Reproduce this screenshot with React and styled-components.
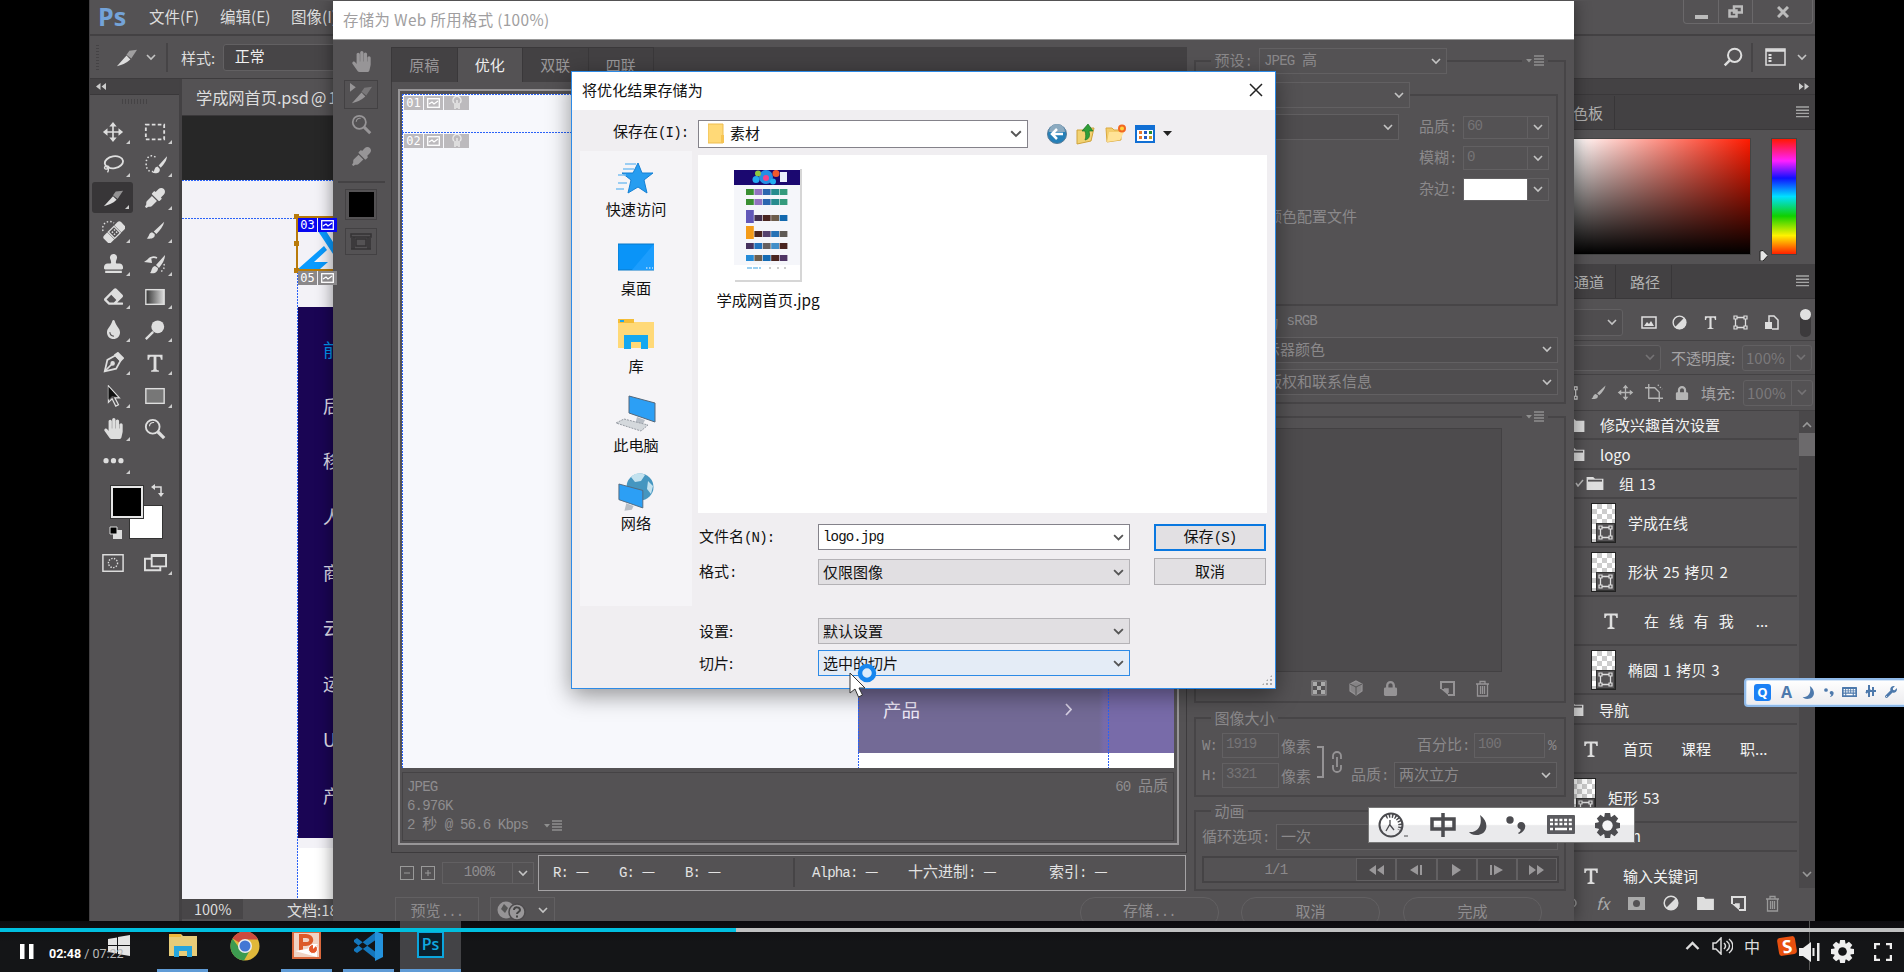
import React from "react";
import styled, { createGlobalStyle, css } from "styled-components";
import { FaEyeDropper, FaEraser, FaStamp, FaTint, FaHandPaper, FaLock, FaWrench } from "react-icons/fa";

const ui = `"Noto Sans CJK SC", sans-serif`;
const bg = "#545254";
const edge = "#434143";
const fieldLine = "#626062";
const dim = "#8b898b";

const Global = createGlobalStyle`
  * { box-sizing: border-box; }
  html, body { margin: 0; background: #000; }
  body { font: 15px/1 ${ui}; color: #ddd; }
  svg { display: block; flex: none; }
`;

const Stage = styled.div`
  position: relative;
  width: 1904px;
  height: 972px;
  overflow: hidden;
  background: #000;
  white-space: pre;
`;

/* ---------- text helpers ---------- */
const LatinRun = styled.span`
  font-family: "Liberation Mono", monospace;
  font-size: 0.94em;
  letter-spacing: -0.062em;
`;
function Song({ children }) {
  return String(children)
    .split(/([\x20-\x7e]+)/)
    .map((t, i) => (i % 2 ? <LatinRun key={i}>{t}</LatinRun> : t));
}
const Label = styled.span`
  display: inline-block;
  flex: none;
  width: ${(p) => (p.$w ? p.$w + "px" : "auto")};
  margin-left: ${(p) => p.$ml || 0}px;
  font-size: ${(p) => (p.$size ? p.$size + "px" : "inherit")};
  color: ${(p) => p.$color || "inherit"};
`;
const Gap = styled.span`
  flex: none;
  width: ${(p) => p.$w}px;
`;

/* ---------- icons ---------- */
function Svg({ s = 22, h, vb = 24, children, color = "#dedede", ...r }) {
  return (
    <svg width={s} height={h || s} viewBox={`0 0 ${vb} ${vb}`} fill="none" stroke={color} strokeWidth="2" {...r}>
      {children}
    </svg>
  );
}
const Chevron = ({ color = "#c4c4c4", w = 10, flip }) => (
  <svg width={w} height={w * 0.7} viewBox="0 0 10 7" fill="none" stroke={color} strokeWidth="1.6">
    <path d={flip ? "M1 6l4-4 4 4" : "M1 1l4 4 4-4"} />
  </svg>
);
const MenuLines = ({ color = "#a5a5a5" }) => (
  <svg width="13" height="12" viewBox="0 0 13 12" stroke={color} strokeWidth="1.4">
    <path d="M0 1h13M0 4.2h13M0 7.4h13M0 10.6h13" />
  </svg>
);
const FlyoutMenu = () => (
  <svg width="18" height="12" viewBox="0 0 18 12" stroke="#8f8f8f" strokeWidth="1.4">
    <path d="M0 4h6l-3 3.500z" fill="#8f8f8f" stroke="none" />
    <path d="M8 1h10M8 4h10M8 7h10M8 10h10" />
  </svg>
);
const Move = ({ s, color = "#dedede" }) => (
  <Svg s={s} color={color}>
    <path d="M12 4v16M4 12h16" strokeWidth="1.8" />
    <path d="M12 1l4 5H8zM12 23l4-5H8zM1 12l5-4v8zM23 12l-5-4v8z" fill={color} stroke="none" />
  </Svg>
);
const Marquee = () => (
  <Svg>
    <rect x="2" y="4" width="20" height="16" strokeDasharray="4 2.500" />
  </Svg>
);
const Lasso = () => (
  <Svg>
    <ellipse cx="13" cy="9" rx="10" ry="6.500" transform="rotate(-10 13 9)" />
    <path d="M5 13c-4 1-2 5 1 3s1-3-1-3c2 2 3 4 1 7" strokeWidth="1.500" />
  </Svg>
);
const QuickSelect = () => (
  <Svg s={25}>
    <path d="M12 5c-4-3-9-1-9 6s4 9 9 7" strokeDasharray="1.500 2" strokeWidth="1.500" />
    <path d="M23 4l-8 9 2 2c3-3 6-7 6-11zM14 14c-4 1-2 4-5 6 4 1 8 0 7-4z" fill="#dedede" stroke="none" />
  </Svg>
);
const Slice = ({ s = 22, color = "#dedede", pick }) => (
  <Svg s={s} color={color}>
    <path d="M2 21L12 10l4 4C12 18 6 20 2 21z" fill={color} stroke="none" />
    <path d="M12 9l3-4 8-1-6 9z" fill={color} opacity=".55" stroke="none" />
    {pick && <path d="M0 0v9l6-4.500z" fill={color} stroke="none" />}
  </Svg>
);
const Brush = ({ s = 21, color = "#dedede" }) => (
  <Svg s={s} color={color}>
    <path d="M22 2L10 13l3 3c4-4 8-9 9-14zM8 14c-4 1-3 5-6 7 5 1 10 0 9-5z" fill={color} stroke="none" />
  </Svg>
);
const Healing = () => (
  <Svg s={24}>
    <path d="M2 12c-2-8 6-12 11-8" strokeDasharray="1.500 2" strokeWidth="1.400" />
    <g transform="rotate(-45 13 13)">
      <rect x="1" y="8.500" width="24" height="10" rx="2.500" fill="#dedede" stroke="none" />
      <rect x="8" y="8" width="10" height="11" fill="#545254" stroke="none" />
      <rect x="9" y="9" width="8" height="9" strokeWidth="1.300" />
      <path d="M11 12h1.500M14 12h1.500M11 15h1.500M14 15h1.500" strokeWidth="1.500" />
    </g>
  </Svg>
);
const HistoryBrush = () => (
  <Svg s={24}>
    <path d="M22 3l-9 10 3 3c3-4 6-8 6-13zM12 14c-4 1-3 5-5 7 5 1 8-1 8-5z" fill="#dedede" stroke="none" />
    <path d="M5 10c0-4 5-6 9-4" strokeWidth="1.600" />
    <path d="M1 10l7-5 1 6z" fill="#dedede" stroke="none" />
    <path d="M21 12c1 4-1 7-4 8" strokeDasharray="1.500 2" strokeWidth="1.400" />
  </Svg>
);
const GradientTool = () => (
  <Svg>
    <defs>
      <linearGradient id="toolGradient">
        <stop stopColor="#333" />
        <stop offset="1" stopColor="#ddd" />
      </linearGradient>
    </defs>
    <rect x="2" y="4" width="20" height="16" fill="url(#toolGradient)" strokeWidth="1.500" />
  </Svg>
);
const Dodge = () => (
  <Svg>
    <circle cx="15" cy="8.500" r="7" fill="#dedede" stroke="none" />
    <path d="M10 14l-8 8" strokeWidth="2.500" />
  </Svg>
);
const Pen = () => (
  <Svg s={21}>
    <path d="M2 22l3-13 9-5 6 6-5 9z" />
    <path d="M14 3l3-2 6 6-3 3z" fill="#dedede" />
    <path d="M2 22l8-8" />
    <circle cx="11" cy="13" r="1.600" fill="#dedede" />
  </Svg>
);
const TypeT = ({ s = 22, color = "#dedede" }) => (
  <Svg s={s} color={color}>
    <path d="M3 2h18v6h-2c0-3-1-3.500-3-3.500h-2.300V19c0 1.500 1 1.800 3 2v1.500H7.300V21c2 -.2 3-.5 3-2V4.500H8C6 4.500 5 5 5 8H3z" fill={color} stroke="none" />
  </Svg>
);
const PathSelect = () => (
  <Svg>
    <path d="M7 1v18l4-4 4 8 3-1.500-4-7.500h5z" strokeWidth="1.300" fill="#545254" />
    <path d="M7 2v14l4-4 6 1z" fill="#111" stroke="none" />
  </Svg>
);
const RectTool = () => (
  <Svg>
    <rect x="2" y="4" width="20" height="16" fill="#777" strokeWidth="1.500" />
  </Svg>
);
const Zoom = ({ color = "#dedede", s = 22 }) => (
  <Svg s={s} color={color}>
    <circle cx="9.500" cy="9.500" r="7.500" />
    <path d="M6 9a4 4 0 0 1 5-4" strokeWidth="1.200" />
    <path d="M15 15l7 7" strokeWidth="3.500" />
  </Svg>
);
const Dots = () => (
  <Svg s={21}>
    <g fill="#dedede" stroke="none">
      <circle cx="3.500" cy="11" r="3" />
      <circle cx="12" cy="11" r="3" />
      <circle cx="20.500" cy="11" r="3" />
    </g>
  </Svg>
);
const FolderIcon = ({ w = 18, open }) => (
  <svg width={w} height="14" viewBox="0 0 18 15">
    <path d="M0 1h7l2 2h9v12H0z" fill="#dedede" />
    {open && <path d="M1.500 5h15" stroke="#545254" strokeWidth="2" />}
  </svg>
);
const Trash = ({ color = "#999" }) => (
  <Svg s={17} color={color} vb={17}>
    <path d="M2 4h13M6 3.500V1.500h5v2M3.500 4v12h10V4M6.500 6v8M8.500 6v8M10.500 6v8" strokeWidth="1.300" />
  </Svg>
);
const NewPage = ({ color = "#dedede" }) => (
  <Svg s={15} color={color} vb={15}>
    <path d="M1 8V1h13v13H8" />
    <path d="M1 8h7v6z" fill={color} stroke="none" />
    <path d="M4 8h4v4" strokeWidth="1.500" />
  </Svg>
);
const HalfDisc = ({ s = 16 }) => (
  <Svg s={s} vb={16}>
    <circle cx="8" cy="8" r="6.800" strokeWidth="1.500" />
    <path d="M13 3a7 7 0 0 1-10 10z" fill="#dedede" stroke="none" />
  </Svg>
);
const ShapeBox = ({ s = 15 }) => (
  <Svg s={s} vb={15}>
    <path d="M2.500 2.500h10v10h-10z" strokeWidth="1.300" />
    <path d="M1 1h3v3H1zM11 1h3v3h-3zM1 11h3v3H1zM11 11h3v3h-3z" fill="#545254" strokeWidth="1.200" />
  </Svg>
);
const PictureIcon = ({ color = "#dedede", w = 16 }) => (
  <svg width={w} height="13" viewBox="0 0 16 13" fill="none" stroke={color} strokeWidth="1.500">
    <rect x="1" y="1" width="14" height="11" />
    <path d="M3 10l3-4 2 2 2-3 3 5z" fill={color} stroke="none" />
  </svg>
);
const SliceMark = () => (
  <svg width="13" height="10" viewBox="0 0 13 10" fill="none" stroke="#fff" strokeWidth="1.300">
    <rect x=".7" y=".7" width="11.600" height="8.600" />
    <path d="M2 6l3-2 2 2 4-3" />
  </svg>
);
const CropIcon = () => (
  <Svg s={18} color="#b5b5b5">
    <path d="M5 0v19h19M0 5h13l6 6v13" strokeWidth="1.800" />
    <path d="M17 1l6 6" strokeWidth="1.500" strokeDasharray="2 2" />
  </Svg>
);
const Moon = ({ color, s = 20 }) => (
  <svg width={s} height={s} viewBox="0 0 20 20">
    <path d="M12 0c10 7 8 20-4 20-4 0-6-2-7-3C9 18 15 11 12 0z" fill={color} />
  </svg>
);
const Keyboard = ({ color, w = 28 }) => (
  <svg width={w} height={w * 0.68} viewBox="0 0 28 19">
    <rect width="28" height="19" rx="1" fill={color} />
    <path d="M3 5h22M3 9h22" stroke="#fff" strokeWidth="2.600" strokeDasharray="3 1.700" />
    <path d="M3 14h3M8 14h12M22 14h3" stroke="#fff" strokeWidth="2.400" />
  </svg>
);
const Comma = ({ color, w = 20 }) => (
  <svg width={w} height={w * 0.9} viewBox="0 0 20 18" fill={color}>
    <circle cx="4" cy="4" r="3.700" />
    <path d="M15 6c6 0 6 9-2 12l-1-1c3-2 3-3 2-4-4-1-3-7 1-7z" />
  </svg>
);
const Gear = ({ color, s, hole = "#fff", r = 4 }) => (
  <svg width={s} height={s} viewBox="0 0 24 24">
    <g fill={color}>
      <circle cx="12" cy="12" r="9" />
      {[0, 45, 90, 135, 180, 225, 270, 315].map((a) => (
        <path key={a} d="M9.500 0h5l1 6h-7z" transform={`rotate(${a} 12 12)`} />
      ))}
    </g>
    <circle cx="12" cy="12" r={r} fill={hole} />
  </svg>
);

/* ---------- generic controls ---------- */
const SelectBox = styled.div`
  display: flex;
  flex: none;
  align-items: center;
  justify-content: space-between;
  width: ${(p) => p.$w}px;
  height: ${(p) => p.$h || 26}px;
  padding: 0 5px 0 4px;
  border: 1px solid ${fieldLine};
  border-radius: ${(p) => p.$r || 0}px;
  background: ${(p) => p.$fill || "#4f4d4f"};
  color: ${(p) => p.$color || dim};
  & > span {
    padding-bottom: 3px;
  }
`;
const NumberBox = styled.div`
  display: flex;
  flex: none;
  align-items: stretch;
  width: ${(p) => p.$w}px;
  height: ${(p) => p.$h || 25}px;
  border: 1px solid ${fieldLine};
  border-radius: ${(p) => p.$r || 0}px;
  color: ${(p) => p.$color || "#767476"};
  & > span:first-child {
    flex: 1;
    display: flex;
    align-items: center;
    justify-content: ${(p) => (p.$center ? "center" : "flex-start")};
    padding: 0 0 1px 3px;
    background: ${(p) => p.$paint || "transparent"};
  }
`;
const DropPart = styled.span`
  display: flex;
  width: 21px;
  align-items: center;
  justify-content: center;
  border-left: 1px solid ${fieldLine};
`;
const Row = styled.div`
  display: flex;
  flex: none;
  align-items: center;
  height: ${(p) => p.$h}px;
  margin-top: ${(p) => p.$mt || 0}px;
  padding-left: ${(p) => p.$pl || 0}px;
`;

/* ---------- Photoshop main window ---------- */
const PsWindow = styled.section`
  position: absolute;
  left: 89px;
  top: 0;
  width: 1726px;
  height: 921px;
  display: flex;
  flex-direction: column;
  background: ${bg};
  border-left: 1px solid ${edge};
`;
const MenuBar = styled.header`
  display: flex;
  height: 36px;
  padding-left: 8px;
  font-size: 15.5px;
  border-bottom: 2px solid ${edge};
`;
const PsMark = styled.b`
  width: 51px;
  font: bold 25px/32px "Open Sans", sans-serif;
  color: #74a3d8;
`;
const MenuItem = styled.span`
  width: 71px;
  line-height: 33px;
`;
const WindowButtons = styled.div`
  display: flex;
  height: 24px;
  margin: 0 2px 0 auto;
  border: 1px solid #6a686a;
  border-top: 0;
  border-radius: 0 0 4px 4px;
  color: #bdbdbd;
`;
const WindowButton = styled.span`
  display: flex;
  width: ${(p) => p.$w}px;
  align-items: center;
  justify-content: center;
  & + & {
    border-left: 1px solid #6a686a;
  }
`;
const OptionsBar = styled.div`
  display: flex;
  align-items: center;
  height: 43px;
  border-bottom: 1px solid #3d3b3d;
  padding-left: 6px;
  & > svg {
    margin-right: 8px;
  }
`;
const Grip = styled.span`
  width: ${(p) => p.$w}px;
  height: ${(p) => p.$h}px;
  background: repeating-linear-gradient(${(p) => (p.$x ? "90deg" : "180deg")}, #454345 0 1px, transparent 1px 3px);
`;
const Divider = styled.span`
  width: 2px;
  height: ${(p) => p.$h || 29}px;
  margin-left: ${(p) => p.$ml || 0}px;
  background: #464446;
`;
const PsBody = styled.div`
  display: flex;
  flex: 1;
  min-height: 0;
`;
const Toolbox = styled.aside`
  width: 92px;
  border-right: 3px solid ${edge};
`;
const CollapseStrip = styled.div`
  display: flex;
  align-items: center;
  justify-content: ${(p) => (p.$right ? "flex-end" : "flex-start")};
  height: 16px;
  padding: 0 6px;
  background: #444244;
  border-bottom: 1px solid #3a383a;
`;
const ToolGrid = styled.div`
  display: grid;
  grid-template-columns: 42px 42px;
  grid-auto-rows: 33px;
  margin: ${(p) => (p.$tight ? 2 : 7)}px 0 0 2px;
`;
const ToolCell = styled.div`
  position: relative;
  display: flex;
  align-items: center;
  justify-content: center;
  color: #dedede;
  ${(p) =>
    p.$active &&
    css`
      background: #383638;
      border-radius: 3px;
      margin: 1px 1px 1px 0;
    `}
  &::after {
    content: "";
    position: absolute;
    right: 4px;
    bottom: 4px;
    border: 2px solid;
    border-color: transparent #ccc #ccc transparent;
    opacity: ${(p) => (p.$plain ? 0 : 1)};
  }
`;
const SwatchArea = styled.div`
  position: relative;
  height: 58px;
  margin: 8px 0 0 18px;
`;
const Swatch = styled.span`
  position: absolute;
  left: ${(p) => p.$x}px;
  top: ${(p) => p.$y}px;
  width: 32px;
  height: 32px;
  border: 2px solid ${(p) => (p.$dark ? "#e6e6e6" : "#fff")};
  outline: 1px solid #333;
  background: ${(p) => (p.$dark ? "#000" : "#fff")};
`;
const SwapMark = styled.span`
  position: absolute;
  left: ${(p) => p.$x}px;
  top: ${(p) => p.$y}px;
`;
const DocumentArea = styled.main`
  display: flex;
  flex-direction: column;
  width: 1382px;
`;
const DocTab = styled.div`
  height: 37px;
  padding-left: 14px;
  font-size: 16.3px;
  line-height: 36px;
  word-spacing: -1.5px;
  letter-spacing: -0.1px;
  border-bottom: 1px solid #3a383a;
`;
const Canvas = styled.div`
  position: relative;
  flex: 1;
  overflow: hidden;
  background: linear-gradient(#272727 64px, #f3f2f7 64px);
`;
const GuideLine = styled.i`
  position: absolute;
  left: ${(p) => p.$x}px;
  top: ${(p) => p.$y}px;
  width: ${(p) => (p.$vertical ? 1 : p.$len)}px;
  height: ${(p) => (p.$vertical ? p.$len : 1)}px;
  background: repeating-linear-gradient(${(p) => (p.$vertical ? "180deg" : "90deg")}, #2a62f8 0 2px, transparent 2px 3px);
`;
const NavPoster = styled.div`
  position: absolute;
  left: 116px;
  top: 191px;
  width: 60px;
  height: 531px;
  background: #1a0554;
  padding: 15px 0 0 25px;
  font-size: 18px;
  color: #e6e2ef;
`;
const NavWord = styled.div`
  height: 55.7px;
  line-height: 54px;
  color: ${(p) => (p.$on ? "#0098f0" : "inherit")};
`;
const PosterTail = styled.div`
  position: absolute;
  left: 116px;
  top: 732px;
  width: 60px;
  height: 60px;
  background: #fff;
`;
const LogoSlice = styled.div`
  position: absolute;
  left: 114px;
  top: 100px;
  width: 60px;
  height: 55px;
  border: 2px solid #b97b0a;
  background: #f3f2f7;
  &::before,
  &::after {
    content: "";
    position: absolute;
    left: -4px;
    width: 5px;
    height: 5px;
    background: #b97b0a;
    box-shadow: 0 27px #b97b0a;
  }
  &::before {
    top: -4px;
  }
  &::after {
    bottom: -4px;
    box-shadow: none;
  }
`;
const SliceTag = styled.div`
  position: absolute;
  z-index: 1;
  left: ${(p) => p.$x}px;
  top: ${(p) => p.$y}px;
  display: flex;
  gap: 1px;
  height: 14px;
  & > span {
    display: flex;
    align-items: center;
    justify-content: center;
    min-width: 19px;
    padding: 0 1px;
    background: ${(p) => p.$bg || "#bcbabd"};
    color: #fff;
    font: 12px "DejaVu Sans Mono", monospace;
  }
  & > span:last-child {
    width: ${(p) => (p.$link ? "25px" : "19px")};
  }
`;
const StatusBar = styled.footer`
  display: flex;
  align-items: center;
  height: 22px;
  padding-bottom: 2px;
  font-size: 15px;
  & > span:first-child {
    width: 61px;
    background: #484648;
    line-height: 20px;
    padding-left: 12px;
    margin-right: 44px;
    font-size: 14.5px;
  }
`;
const Dock = styled.aside`
  flex: 1;
  min-width: 0;
  display: flex;
  flex-direction: column;
`;
const DockTabs = styled.div`
  display: flex;
  align-items: center;
  height: 35px;
  padding-right: 6px;
  background: #434143;
  border-bottom: 1px solid #3a383a;
  color: #b0b0b0;
  & > svg {
    margin-left: auto;
  }
`;
const DockTab = styled.span`
  padding: 0 11px 0 ${(p) => p.$pl}px;
  line-height: 33px;
  border-right: 1px solid #383638;
`;
const ColorPanel = styled.div`
  display: flex;
  height: 134px;
  padding-top: 8px;
`;
const ColorField = styled.div`
  width: 187px;
  height: 117px;
  background: linear-gradient(transparent, #000), linear-gradient(90deg, #fff 5%, #ff1a00);
  border: 1px solid #444;
`;
const HueStrip = styled.div`
  width: 26px;
  height: 117px;
  border: 1px solid #444;
  background: linear-gradient(#ff1800, #ff20ff 19%, #1010ff 34%, #00e0ff 50%, #10d000 67%, #fff200 84%, #ff2000);
`;
const HuePointer = styled.span`
  align-self: flex-end;
  width: 20px;
  padding: 0 0 3px 8px;
`;
const DockRow = styled(Row)`
  padding-top: ${(p) => p.$pt || 0}px;
  border-bottom: 1px solid #444244;
`;
const LayerArea = styled.div`
  display: flex;
  height: 477px;
`;
const LayerList = styled.div`
  width: 233px;
  overflow: hidden;
`;
const LayerRow = styled.div`
  display: flex;
  align-items: center;
  height: ${(p) => p.$h}px;
  padding: 0 0 ${(p) => p.$pb || 0}px ${(p) => p.$pl}px;
  border-bottom: 2px solid #474547;
  color: #f2f2f2;
  font-size: 15px;
  word-spacing: 1.6px;
`;
const LayerThumb = styled.span`
  display: flex;
  flex: none;
  align-items: flex-end;
  justify-content: flex-end;
  width: 25px;
  height: 40px;
  margin-right: 12px;
  border: 1px solid #222;
  background: conic-gradient(#ccc 25%, #fff 0 50%, #ccc 0 75%, #fff 0) 0 0 / 10px 10px;
  & > span {
    padding: 1px;
    background: ${bg};
    border: 1px solid #333;
  }
`;
const Scroller = styled.div`
  flex: 1;
  margin-left: 2px;
  background: #4a484a;
  display: flex;
  flex-direction: column;
  align-items: center;
  padding: 10px 0;
  justify-content: space-between;
  & > div {
    width: 100%;
    display: flex;
    flex-direction: column;
    align-items: center;
    gap: 5px;
  }
`;
const ScrollThumb = styled.span`
  width: 100%;
  height: 23px;
  background: #6c6a6c;
`;

/* ---------- Save-for-web window ---------- */
const ExportWindow = styled.section`
  position: absolute;
  left: 333px;
  top: 1px;
  width: 1241px;
  height: 920px;
  overflow: hidden;
  background: ${bg};
  display: flex;
  flex-direction: column;
`;
const WindowShade = styled.div`
  position: absolute;
  left: 333px;
  top: 1px;
  width: 1241px;
  height: 920px;
  box-shadow: 0 0 16px rgba(0, 0, 0, 0.45);
  clip-path: inset(0 -20px 0 -20px);
`;
const ExportTitle = styled.header`
  height: 39px;
  padding-left: 10px;
  background: #fff;
  color: #a09ea0;
  font-size: 15.4px;
  letter-spacing: 0.35px;
  line-height: 36px;
  border-bottom: 1px solid #999;
`;
const ExportBody = styled.div`
  display: flex;
  flex: 1;
  min-height: 0;
`;
const ToolRail = styled.div`
  width: 56px;
  margin-right: 2px;
  display: flex;
  flex-direction: column;
  align-items: center;
  color: #979597;
`;
const RailCell = styled.span`
  display: flex;
  flex: none;
  align-items: center;
  justify-content: center;
  width: ${(p) => p.$w || 34}px;
  height: ${(p) => p.$h || 29}px;
  margin-top: ${(p) => p.$mt || 0}px;
  border: ${(p) => (p.$boxed ? "1px solid #434143" : "0")};
  & > i {
    width: 25px;
    height: 25px;
    background: #000;
  }
`;
const RailRule = styled.span`
  width: 47px;
  height: 2px;
  margin-top: 10px;
  background: #444244;
`;
const Workspace = styled.div`
  width: 796px;
  padding-top: 7px;
`;
const ViewTabs = styled.div`
  display: flex;
  height: 35px;
  background: #434143;
  border-left: 1px solid #3a383a;
`;
const ViewTab = styled.span`
  width: 65.500px;
  text-align: center;
  line-height: 34px;
  border-right: 1px solid #3a383a;
  border-top: 1px solid #3a383a;
  background: ${(p) => (p.$on ? bg : "transparent")};
  color: ${(p) => (p.$on ? "#eee" : "#9a989a")};
`;
const ViewFrame = styled.div`
  height: 771px;
  padding: 7px 7px 7px 6px;
  border: 1px solid #3d3b3d;
  border-top: 0;
`;
const ActiveView = styled.div`
  height: 756px;
  padding: 3px 3px 2px 2px;
  border: 2px solid #989698;
  display: flex;
  flex-direction: column;
  gap: 4px;
`;
const Preview = styled.div`
  position: relative;
  height: 674px;
  background: #f7f8fc;
  overflow: hidden;
`;
const ProductBand = styled.div`
  position: absolute;
  left: 456px;
  top: 580px;
  width: 316px;
  height: 79px;
  display: flex;
  align-items: center;
  padding: 0 102px 8px 25px;
  justify-content: space-between;
  color: #efe9f8;
  font-size: 18.5px;
  background: linear-gradient(90deg, #736a96 241px, #786ba9 246px);
`;
const BandFooter = styled.div`
  position: absolute;
  left: 456px;
  right: 0;
  top: 659px;
  bottom: 0;
  background: #fff;
`;
const InfoBox = styled.div`
  display: flex;
  justify-content: space-between;
  height: 69px;
  padding: 3px 5px 0 4px;
  border: 1px solid #454345;
  color: #8f8d8f;
`;
const InfoLine = styled.div`
  display: flex;
  align-items: center;
  gap: 16px;
  height: 19px;
  & > svg {
    margin-top: 5px;
  }
`;
const StepBox = styled.span`
  display: flex;
  align-items: center;
  justify-content: center;
  width: 14px;
  height: 14px;
  margin-right: 7px;
  border: 1px solid #999;
`;
const Readout = styled.div`
  display: flex;
  align-items: center;
  width: 648px;
  height: 36px;
  margin-left: 4px;
  padding: 0 0 2px 14px;
  border: 1px solid #a5a3a5;
  color: #e3e3e3;
`;
const FlatButton = styled.div`
  display: flex;
  align-items: center;
  flex: none;
  justify-content: ${(p) => p.$justify || "center"};
  width: ${(p) => p.$w}px;
  height: 31px;
  margin-left: ${(p) => p.$ml || 0}px;
  padding-bottom: 4px;
  border: 1px solid ${fieldLine};
  border-radius: ${(p) => p.$r || 0}px;
  color: #8f8d8f;
`;
const Actions = styled.div`
  display: flex;
  margin-top: 6px;
  padding-left: 4px;
`;
const Settings = styled.div`
  width: 387px;
  padding: 20px 0 0 7px;
  color: ${dim};
`;
const Group = styled.div`
  width: ${(p) => p.$w || 372}px;
  height: ${(p) => p.$h}px;
  margin: ${(p) => p.$mt || 0}px 0 0 ${(p) => p.$ml || 0}px;
  border: 2px solid #474547;
`;
const Legend = styled.div`
  display: flex;
  align-items: center;
  height: 26px;
  margin-top: ${(p) => p.$mt || -14}px;
  padding: 0 20px 0 ${(p) => (p.$pl === undefined ? 15 : p.$pl)}px;
  & > * {
    background-color: ${bg};
  }
  & > svg:last-child {
    margin-left: auto;
    box-shadow: 0 0 0 4px ${bg};
  }
`;
const ColorTable = styled.div`
  width: 298px;
  height: 244px;
  margin: -2px 0 0 8px;
  background: #4d4b4d;
  border: 1px solid #434143;
`;
const Playback = styled.div`
  display: flex;
  height: 27px;
  margin: 6px 5px 0 6px;
  border: 2px solid #454345;
`;
const FrameCount = styled.span`
  width: 153px;
  padding: 2px 69px 0 0;
  text-align: right;
`;
const PlayKey = styled.span`
  display: flex;
  align-items: center;
  justify-content: center;
  width: 40.500px;
  border: 1px solid ${fieldLine};
  background: #4a484a;
`;

/* ---------- Save dialog ---------- */
const Dialog = styled.section`
  position: absolute;
  left: 571px;
  top: 71px;
  width: 705px;
  height: 618px;
  display: flex;
  flex-direction: column;
  background: #f0eef1;
  border: 1px solid #2d8ae6;
  box-shadow: 0 6px 22px rgba(0, 0, 0, 0.42);
  color: #111;
`;
const DialogTitle = styled.header`
  display: flex;
  align-items: center;
  justify-content: space-between;
  height: 38px;
  padding: 0 12px 3px 10px;
  background: #fff;
  font-size: 15.1px;
`;
const DialogBody = styled.div`
  display: flex;
  flex: 1;
`;
const PlaceColumn = styled.div`
  width: 126px;
  padding-left: 8px;
`;
const LookInLabel = styled.div`
  height: 41px;
  padding: 13px 0 0 33px;
`;
const Places = styled.nav`
  width: 112px;
  height: 455px;
  background: #f5f4f7;
  padding-top: 8px;
`;
const Place = styled.div`
  display: flex;
  flex-direction: column;
  align-items: center;
  gap: 4px;
  height: 78.500px;
  font-size: 15.2px;
`;
const FileColumn = styled.div`
  flex: 1;
  display: flex;
  flex-direction: column;
`;
const WinSelect = styled.div`
  display: flex;
  align-items: center;
  flex: none;
  width: ${(p) => p.$w || 312}px;
  height: ${(p) => p.$h || 26}px;
  padding: 0 5px 0 4px;
  border: 1px solid ${(p) => (p.$hot ? "#2d8ae6" : p.$open ? "#84828a" : "#b4b2b6")};
  background: ${(p) => (p.$hot ? "#e4ecf6" : p.$open ? "#fff" : "#e1dfe2")};
  & > span {
    padding-bottom: 2px;
  }
  & > svg:last-child {
    margin: 2px 0 0 auto;
  }
`;
const PathRow = styled.div`
  display: flex;
  align-items: center;
  height: 45px;
  padding-top: 2px;
  & > svg {
    margin-left: 8px;
  }
`;
const FileList = styled.div`
  width: 569px;
  height: 358px;
  padding: 10px 0 0 11px;
  background: #fff;
`;
const FileItem = styled.div`
  display: flex;
  flex-direction: column;
  align-items: center;
  gap: 9px;
  width: 118px;
  font-size: 15.3px;
  & > svg {
    margin-left: -2px;
  }
`;
const FormArea = styled.div`
  display: flex;
  padding-top: 11px;
`;
const FormRows = styled.div`
  width: 432px;
`;
const FormRow = styled.div`
  display: flex;
  align-items: center;
  height: 26px;
  margin-bottom: ${(p) => p.$mb}px;
  & > span:first-child {
    width: 120px;
    flex: none;
    padding: 0 0 1px 1px;
  }
`;
const ButtonStack = styled.div`
  display: flex;
  flex-direction: column;
  gap: 7px;
  margin-left: 24px;
`;
const WinButton = styled.button`
  width: 112px;
  height: 27px;
  padding: 0 0 2px;
  font: 15px/1 ${ui};
  color: #111;
  background: #e2e0e3;
  border: ${(p) => (p.$primary ? "2px solid #0a78e0" : "1px solid #b0aeb2")};
`;
const ResizeGrip = styled.span`
  position: absolute;
  right: 2px;
  bottom: 2px;
  width: 12px;
  height: 12px;
  background: radial-gradient(circle, #aaa 1px, transparent 1.500px) 0 0 / 4px 4px;
  clip-path: polygon(100% 0, 100% 100%, 0 100%);
`;
const Pointer = styled.div`
  position: absolute;
  left: 848px;
  top: 662px;
`;

/* ---------- floating input bars ---------- */
const ImeBar = styled.div`
  position: absolute;
  left: 1368px;
  top: 807px;
  width: 267px;
  height: 36px;
  display: flex;
  align-items: center;
  padding-left: 6px;
  border: 1px solid #777;
  background: linear-gradient(#fff 48%, #eaeaec 52%);
  color: #4c4c50;
`;
const ImeCell = styled.span`
  display: flex;
  flex: none;
  justify-content: center;
  width: ${(p) => p.$w}px;
`;
const MiniBar = styled.div`
  position: absolute;
  left: 1744px;
  top: 678px;
  width: 180px;
  height: 29px;
  display: flex;
  align-items: center;
  padding: 0 0 1px 8px;
  border: 2px solid #8fb9e8;
  border-radius: 4px 0 0 4px;
  background: linear-gradient(#fff, #ecebee);
  box-shadow: inset 0 0 0 1px #d6e6f8;
  color: #4d79ac;
`;
const MiniCell = styled(ImeCell)`
  align-items: center;
  width: 20.800px;
  font: bold 16px "Open Sans", sans-serif;
`;
const QBadge = styled.span`
  width: 17px;
  height: 17px;
  border-radius: 3px;
  background: #1b80f5;
  color: #fff;
  font: bold 13px/17px "Open Sans", sans-serif;
  text-align: center;
  margin-right: 5px;
`;

/* ---------- taskbar and player ---------- */
const Taskbar = styled.footer`
  position: absolute;
  left: 0;
  top: 921px;
  width: 1904px;
  height: 51px;
  display: flex;
  background: linear-gradient(#0c0b0e, #141517 40%);
`;
const TaskSlot = styled.div`
  display: flex;
  flex: none;
  justify-content: center;
  width: ${(p) => p.$w}px;
  margin-left: ${(p) => p.$ml || 0}px;
  padding-top: 10px;
  background: ${(p) => (p.$active ? "#434346" : "transparent")};
  border-bottom: ${(p) => (p.$open ? "3px solid #5f9bd6" : "0")};
`;
const PsTile = styled.span`
  width: 27px;
  height: 27px;
  border: 2px solid #0aa5dd;
  background: #0a1f2c;
  color: #10a9e0;
  font: 600 16px/22px "Open Sans", sans-serif;
  text-align: center;
`;
const Tray = styled.div`
  display: flex;
  align-items: center;
  height: 49px;
  margin-left: 1224px;
`;
const SogouTile = styled.b`
  width: 18px;
  height: 18px;
  margin-left: 18px;
  border-radius: 3px;
  background: #e8500f;
  color: #fff;
  font: bold 18px/18px "Open Sans", sans-serif;
  text-align: center;
  transform: rotate(-9deg);
`;
const TrayEdge = styled.span`
  align-self: stretch;
  width: 1px;
  margin-left: 13px;
  background: #555;
`;
const Player = styled.div`
  position: absolute;
  left: 0;
  top: 928px;
  width: 1904px;
  height: 44px;
`;
const Progress = styled.div`
  height: 4px;
  background: #bfc0c0;
  &::before {
    content: "";
    display: block;
    width: 736px;
    height: 4px;
    background: #00bfdf;
  }
`;
const PlayerControls = styled.div`
  display: flex;
  align-items: center;
  height: 39px;
  padding: 0 12px 0 20px;
  font: 12.500px "Roboto", sans-serif;
  color: #b9b9b9;
`;
const Elapsed = styled.b`
  margin: 4px 0 0 15px;
  color: #fff;
`;
const Duration = styled.span`
  margin: 4px auto 0 3px;
`;

/* ---------- composed parts ---------- */
const toolIcons = [
  [<Move />, 0], [<Marquee />, 0],
  [<Lasso />, 0], [<QuickSelect />, 0],
  [<Slice />, 1], [<FaEyeDropper size={20} />, 0],
  [<Healing />, 0], [<Brush />, 0],
  [<FaStamp size={19} />, 0], [<HistoryBrush />, 0],
  [<FaEraser size={19} />, 0], [<GradientTool />, 0],
  [<FaTint size={19} />, 0], [<Dodge />, 0],
  [<Pen />, 0], [<TypeT s={20} />, 0],
  [<PathSelect />, 0], [<RectTool />, 0],
  [<FaHandPaper size={21} />, 0], [<Zoom />, 2],
  [<Dots />, 0],
];

function Tag({ n, link, ...r }) {
  return (
    <SliceTag $link={link} {...r}>
      <span>{n}</span>
      <span><SliceMark /></span>
      {link && (
        <span>
          <svg width="12" height="14" viewBox="0 0 12 14" fill="none" stroke="#e8e8e8" strokeWidth="1.500">
            <path d="M3 7a4 4 0 1 1 6 0M6 4v8M4 13V7M8 13V7" />
          </svg>
        </span>
      )}
    </SliceTag>
  );
}

function Drop({ value, w, h, ...r }) {
  return (
    <SelectBox $w={w} $h={h} {...r}>
      <span><Song>{value}</Song></span>
      <Chevron />
    </SelectBox>
  );
}
function Percent() {
  return (
    <NumberBox $w={70} $h={26} $r={3} $color="#7b797b">
      <span>100%</span>
      <DropPart><Chevron color="#757375" /></DropPart>
    </NumberBox>
  );
}
function ShapeThumb() {
  return <LayerThumb><span><ShapeBox /></span></LayerThumb>;
}

function PsMain() {
  return (
    <PsWindow>
      <MenuBar>
        <PsMark>Ps</PsMark>
        <MenuItem>文件(F)</MenuItem>
        <MenuItem>编辑(E)</MenuItem>
        <MenuItem>图像(I)</MenuItem>
        <WindowButtons>
          <WindowButton $w={34}><svg width="13" height="16"><path d="M0 11h13v4H0z" fill="#bbb" /></svg></WindowButton>
          <WindowButton $w={34}>
            <svg width="15" height="13" fill="none" stroke="#bbb" strokeWidth="2.500"><path d="M6 1.500h8v6H6zM1.500 5.500h7v6h-7z" /></svg>
          </WindowButton>
          <WindowButton $w={60}><svg width="12" height="12" stroke="#bbb" strokeWidth="3"><path d="M1 1l10 10M11 1L1 11" /></svg></WindowButton>
        </WindowButtons>
      </MenuBar>
      <OptionsBar>
        <Grip $w={3} $h={25} />
        <Gap $w={16} />
        <Slice s={23} />
        <Chevron />
        <Divider $ml={2} />
        <Label $ml={13} $w={42}>样式:</Label>
        <SelectBox $w={130} $h={27} $r={3} $color="#f0f0f0" $fill="#474547"><span>{"  "}正常</span><Chevron /></SelectBox>
        <Gap $w={1370} />
        <Svg s={20}><circle cx="14" cy="10" r="8" strokeWidth="2.400" /><path d="M8 16l-6 6" strokeWidth="3" /></Svg>
        <Divider />
        <Gap $w={12} />
        <svg width="21" height="18" fill="none" stroke="#dedede" strokeWidth="1.500"><rect x="1" y="1" width="19" height="16" /><path d="M1 2.500h19" strokeWidth="2.500" /><path d="M5 6v8" strokeWidth="3" strokeDasharray="2 1" /></svg>
        <Gap $w={3} />
        <Chevron />
      </OptionsBar>
      <PsBody>
        <Toolbox>
          <CollapseStrip>
            <svg width="10" height="7" fill="#ccc"><path d="M4.500 0v7L0 3.500zM10 0v7L5.500 3.500z" /></svg>
          </CollapseStrip>
          <Row $h={13} $pl={32}><Grip $w={25} $h={5} $x /></Row>
          <ToolGrid>
            {toolIcons.map(([icon, state], i) => (
              <ToolCell key={i} $active={state === 1} $plain={state === 2}>{icon}</ToolCell>
            ))}
          </ToolGrid>
          <SwatchArea>
            <Swatch $x={22} $y={20} />
            <Swatch $x={3} $y={0} $dark />
            <SwapMark $x={43} $y={-3}>
              <svg width="14" height="14" viewBox="0 0 14 14" fill="none" stroke="#ddd" strokeWidth="1.500"><path d="M2 4h8v8" /><path d="M0 4l4-3v6zM10 14l-3-4h6z" fill="#ddd" stroke="none" /></svg>
            </SwapMark>
            <SwapMark $x={1} $y={40}>
              <svg width="13" height="13"><path d="M4 4h9v9H4z" fill="#ddd" /><path d="M1 1h7v7H1z" fill="#000" stroke="#ddd" /></svg>
            </SwapMark>
          </SwatchArea>
          <ToolGrid $tight>
            <ToolCell $plain><Svg s={22}><rect x="1" y="3" width="22" height="18" strokeWidth="1.600" /><circle cx="12" cy="12" r="5" strokeDasharray="1.500 1.500" strokeWidth="1.500" /></Svg></ToolCell>
            <ToolCell><Svg s={23}><path d="M8 4h15v12H8z" /><path d="M8 8H1v12h16v-4" /><path d="M8 5h15" strokeWidth="2.500" /></Svg></ToolCell>
          </ToolGrid>
        </Toolbox>
        <DocumentArea>
          <DocTab>学成网首页.psd @ 100%</DocTab>
          <Canvas>
            <GuideLine $x={0} $y={64} $len={160} />
            <GuideLine $x={0} $y={102} $len={112} />
            <GuideLine $x={115} $y={156} $len={640} $vertical />
            <LogoSlice>
              <svg width="50" height="51" viewBox="0 0 50 51"><path d="M0 51L26 28l3 4-13 12h14l-8 7zM20 13h8l14 22-5 4z" fill="#0a9bff" /></svg>
            </LogoSlice>
            <Tag n="03" $x={116} $y={102} $bg="#0707f0" />
            <Tag n="05" $x={116} $y={155} $bg="#8a888a" />
            <NavPoster>
              {["前端", "后端", "移动", "人工", "商业", "云计", "运维", "UI", "产品"].map((t, i) => (
                <NavWord key={t} $on={i === 0}>{t}</NavWord>
              ))}
            </NavPoster>
            <PosterTail />
          </Canvas>
          <StatusBar><span>100%</span>文档:18.2M</StatusBar>
        </DocumentArea>
        <Dock>
          <CollapseStrip $right>
            <svg width="10" height="7" fill="#ccc"><path d="M0 0v7l4.500-3.500zM5.500 0v7L10 3.500z" /></svg>
          </CollapseStrip>
          <DockTabs><DockTab $pl={9}>色板</DockTab><MenuLines /></DockTabs>
          <ColorPanel>
            <ColorField />
            <HuePointer><svg width="9" height="11"><path d="M1 1l3-.5L9 5.500 4 11H1z" fill="#e6e6e6" stroke="#222" /></svg></HuePointer>
            <HueStrip />
          </ColorPanel>
          <DockTabs><DockTab $pl={10}>通道</DockTab><DockTab $pl={14}>路径</DockTab><MenuLines /></DockTabs>
          <DockRow $h={42} $pt={6}>
            <SelectBox $w={59} $h={27} $r={3}><span /><Chevron /></SelectBox>
            <Gap $w={18} /><PictureIcon /><Gap $w={15} /><HalfDisc s={15} /><Gap $w={16} /><TypeT s={15} /><Gap $w={15} /><ShapeBox /><Gap $w={16} />
            <Svg s={15} vb={15}><path d="M5 7V1h5l4 4v9H8" strokeWidth="1.500" /><path d="M1 7h7v7H1z" fill="#dedede" stroke="none" /></Svg>
            <Gap $w={20} />
            <svg width="13" height="30"><rect x="1" y="4" width="11" height="25" rx="5" fill="#3c3a3c" /><circle cx="6.500" cy="6.500" r="5.500" fill="#e0e0e0" /></svg>
          </DockRow>
          <DockRow $h={34}>
            <SelectBox $w={97} $h={26} $r={3}><span /><Chevron color="#757375" /></SelectBox>
            <Label $ml={10} $w={71} $color="#a5a3a5">不透明度:</Label>
            <Percent />
          </DockRow>
          <DockRow $h={36}>
            <ShapeBox s={14} /><Gap $w={12} /><Brush s={17} color="#b5b5b5" /><Gap $w={10} /><Move s={17} color="#b5b5b5" /><Gap $w={11} /><CropIcon /><Gap $w={12} /><FaLock size={14} color="#b5b5b5" />
            <Label $ml={12} $w={42} $color="#a5a3a5">填充:</Label>
            <Percent />
          </DockRow>
          <LayerArea>
            <LayerList>
              <LayerRow $h={29} $pl={3}><FolderIcon /><Label $ml={15}>修改兴趣首次设置</Label></LayerRow>
              <LayerRow $h={30} $pl={3}><FolderIcon open /><Label $ml={15}>logo</Label></LayerRow>
              <LayerRow $h={29} $pl={11} $pb={1}>
                <svg width="9" height="8" fill="none" stroke="#bbb" strokeWidth="1.500"><path d="M1 4l2 3 5-6" /></svg>
                <Gap $w={2} /><FolderIcon open /><Label $ml={15}>组 13</Label>
              </LayerRow>
              <LayerRow $h={49} $pl={27}><ShapeThumb />学成在线</LayerRow>
              <LayerRow $h={49} $pl={27}><ShapeThumb />形状 25 拷贝 2</LayerRow>
              <LayerRow $h={49} $pl={38}><TypeT s={18} /><Label $ml={24}>在  线  有  我</Label><Label $ml={22}>...</Label></LayerRow>
              <LayerRow $h={49} $pl={27}><ShapeThumb />椭圆 1 拷贝 3</LayerRow>
              <LayerRow $h={30} $pl={2}><FolderIcon open /><Label $ml={15}>导航</Label></LayerRow>
              <LayerRow $h={49} $pl={18}><TypeT s={18} /><Label $ml={23} $w={58}>首页</Label><Label $w={59}>课程</Label><Label>职...</Label></LayerRow>
              <LayerRow $h={49} $pl={7}><ShapeThumb />矩形 53</LayerRow>
              <LayerRow $h={29} $pl={31} $pb={3}>search</LayerRow>
              <LayerRow $h={49} $pl={18}><TypeT s={18} /><Label $ml={23}>输入关键词</Label></LayerRow>
            </LayerList>
            <Scroller>
              <div><Chevron flip color="#999" /><ScrollThumb /></div>
              <Chevron color="#999" />
            </Scroller>
          </LayerArea>
          <Row $h={30} $pl={4}>
            <svg width="10" height="10" fill="none" stroke="#999" strokeWidth="1.500"><circle cx="4" cy="5" r="4" /></svg>
            <Gap $w={18} />
            <Label $w={15} $color="#aaa" $size={16}><i>fx</i></Label>
            <Gap $w={17} />
            <svg width="17" height="13"><path d="M0 0h17v13H0z" fill="#aaa" /><circle cx="8.500" cy="6.500" r="3.500" fill="#545254" /></svg>
            <Gap $w={18} /><HalfDisc /><Gap $w={18} /><FolderIcon w={17} /><Gap $w={17} /><NewPage /><Gap $w={18} /><Trash />
          </Row>
        </Dock>
      </PsBody>
    </PsWindow>
  );
}

const keys = ["M7 1v10L0 6zM15 1v10L8 6z", "M9 1v10L1 6zM11 1h2v10h-2z", "M3 0v12l9-6z", "M1 1h2v10H1zM5 1v10l9-5z", "M0 1v10l7-5zM8 1v10l7-5z"];

function Export() {
  return (
    <ExportWindow>
      <ExportTitle>存储为 Web 所用格式 (100%)</ExportTitle>
      <ExportBody>
        <ToolRail>
          <RailCell $mt={7}><FaHandPaper size={21} /></RailCell>
          <RailCell $mt={4} $boxed><Slice color="#979597" s={23} pick /></RailCell>
          <RailCell $mt={1}><Zoom color="#979597" s={21} /></RailCell>
          <RailCell $mt={3}><FaEyeDropper size={19} /></RailCell>
          <RailRule />
          <RailCell $mt={6} $w={32} $h={31} $boxed><i /></RailCell>
          <RailCell $mt={8} $w={32} $h={27} $boxed>
            <svg width="22" height="17" fill="none" stroke="#353335" strokeWidth="1.500"><path d="M1 1h20v3H1zM1 16h20M2 5v11M20 5v11M4 4v12M18 4v12M6 6h10v7H6z" /></svg>
          </RailCell>
        </ToolRail>
        <Workspace>
          <ViewTabs>
            <ViewTab>原稿</ViewTab><ViewTab $on>优化</ViewTab><ViewTab>双联</ViewTab><ViewTab>四联</ViewTab>
          </ViewTabs>
          <ViewFrame>
            <ActiveView>
              <Preview>
                <GuideLine $x={0} $y={0} $len={780} />
                <GuideLine $x={0} $y={38} $len={780} />
                <Tag n="01" link $x={2} $y={2} />
                <Tag n="02" link $x={2} $y={40} />
                <ProductBand>
                  产品
                  <svg width="7" height="13" fill="none" stroke="#d9d2e6" strokeWidth="1.700"><path d="M1 1l5 5.500L1 12" /></svg>
                </ProductBand>
                <BandFooter />
                <GuideLine $x={0} $y={0} $len={674} $vertical />
                <GuideLine $x={456} $y={580} $len={95} $vertical />
                <GuideLine $x={706} $y={580} $len={95} $vertical />
              </Preview>
              <InfoBox>
                <div>
                  <InfoLine><span><Song>JPEG</Song></span></InfoLine>
                  <InfoLine><span><Song>6.976K</Song></span></InfoLine>
                  <InfoLine><span><Song>2 秒 @ 56.6 Kbps</Song></span><FlyoutMenu /></InfoLine>
                </div>
                <InfoLine><span><Song>60 品质</Song></span></InfoLine>
              </InfoBox>
            </ActiveView>
          </ViewFrame>
          <Row $h={36} $mt={2} $pl={9}>
            <StepBox><svg width="8" height="8" stroke="#999"><path d="M1 4h6" /></svg></StepBox>
            <StepBox><svg width="8" height="8" stroke="#999"><path d="M1 4h6M4 1v6" /></svg></StepBox>
            <NumberBox $w={92} $h={22} $center $color="#8f8d8f">
              <span><Song>100%</Song></span><DropPart><Chevron /></DropPart>
            </NumberBox>
            <Readout>
              <Label $w={66}><Song>R: —</Song></Label>
              <Label $w={66}><Song>G: —</Song></Label>
              <Label $w={108}><Song>B: —</Song></Label>
              <Divider />
              <Label $ml={17} $w={96}><Song>Alpha: —</Song></Label>
              <Label $w={141}><Song>十六进制: —</Song></Label>
              <Label><Song>索引: —</Song></Label>
            </Readout>
          </Row>
          <Actions>
            <FlatButton $w={84}><span><Song>预览...</Song></span></FlatButton>
            <FlatButton $w={65} $ml={11} $justify="space-around">
              <svg width="29" height="20"><circle cx="9" cy="9" r="8.500" fill="#969496" /><path d="M7 3l4 4-3 5-4-4z" fill="#555" /><circle cx="20" cy="11" r="8" fill="#9a989a" stroke="#4c4a4c" strokeWidth="1.500" /><path d="M17 9c0-4 6-3 6 0 0 2-3 2-3 4M20 14.500v2" fill="none" stroke="#444" strokeWidth="2" /></svg>
              <Chevron />
            </FlatButton>
            <FlatButton $w={139} $ml={525} $r={15}><span><Song>存储...</Song></span></FlatButton>
            <FlatButton $w={139} $ml={22} $r={15}>取消</FlatButton>
            <FlatButton $w={139} $ml={23} $r={15}>完成</FlatButton>
          </Actions>
        </Workspace>
        <Settings>
          <Group $h={344}>
            <Legend><Label $w={48}>{" "}<Song>预设:</Song></Label><Drop value="JPEG 高" w={188} /><FlyoutMenu /></Legend>
            <Group $w={357} $h={212} $mt={20} $ml={5}>
              <Legend $pl={8}><Drop value="JPEG" w={199} /><Gap $w={4} /></Legend>
              <Row $h={26} $mt={6} $pl={8}>
                <Drop value="高" w={188} /><Label $ml={20} $w={44}><Song>品质:</Song></Label>
                <NumberBox $w={86} $h={23}><span><Song>60</Song></span><DropPart><Chevron /></DropPart></NumberBox>
              </Row>
              <Row $h={24} $mt={6} $pl={216}>
                <Label $w={44}><Song>模糊:</Song></Label>
                <NumberBox $w={86} $h={24}><span><Song>0</Song></span><DropPart><Chevron /></DropPart></NumberBox>
              </Row>
              <Row $h={24} $mt={7} $pl={216}>
                <Label $w={44}><Song>杂边:</Song></Label>
                <NumberBox $w={86} $h={23} $paint="#fff"><span /><DropPart><Chevron /></DropPart></NumberBox>
              </Row>
              <Row $h={22} $mt={3} $pl={34}>嵌入颜色配置文件</Row>
            </Group>
            <Row $h={18} $mt={6} $pl={38}><Song>转换为 sRGB</Song></Row>
            <Row $h={25} $mt={7} $pl={49}><Drop value="显示器颜色" w={313} /></Row>
            <Row $h={26} $mt={7} $pl={66}><Drop value="版权和联系信息" w={296} /></Row>
          </Group>
          <Group $h={287} $mt={12}>
            <Legend><Gap $w={40} /><FlyoutMenu /></Legend>
            <ColorTable />
            <Row $h={32} $pl={115}>
              <Svg s={16} vb={16} color="#959395"><path d="M1 1h14v14H1z" strokeWidth="1.200" /><path d="M2 2h4v4H2zM10 2h4v4h-4zM6 6h4v4H6zM2 10h4v4H2zM10 10h4v4h-4z" fill="#aaa" stroke="none" /></Svg>
              <Gap $w={21} />
              <Svg s={16} vb={16} color="#959395"><path d="M8 1l6 3v7l-6 4-6-4V4z" fill="#858385" strokeWidth="1.200" /><path d="M2 4l6 3 6-3M8 7v8" stroke="#555" strokeWidth="1" /></Svg>
              <Gap $w={19} /><FaLock size={15} color="#959395" />
              <Gap $w={42} /><NewPage color="#959395" /><Gap $w={19} /><Trash color="#959395" />
            </Row>
          </Group>
          <Group $h={80} $mt={14}>
            <Legend $mt={-15}><Label>{" "}图像大小{" "}</Label></Legend>
            <Row $h={26} $mt={2} $pl={6}>
              <Label $w={20}><Song>W:</Song></Label>
              <NumberBox $w={57}><span><Song>1919</Song></span></NumberBox>
              <Label $ml={2} $w={136}>像素</Label>
              <Label $w={57}><Song>百分比:</Song></Label>
              <NumberBox $w={71}><span><Song>100</Song></span></NumberBox>
              <Label $ml={3}><Song>%</Song></Label>
            </Row>
            <Row $h={26} $mt={4} $pl={6}>
              <Label $w={20}><Song>H:</Song></Label>
              <NumberBox $w={57}><span><Song>3321</Song></span></NumberBox>
              <Label $ml={2} $w={36}>像素</Label>
              <LinkMark />
              <Label $ml={5} $w={43}><Song>品质:</Song></Label>
              <Drop value="两次立方" w={163} />
            </Row>
          </Group>
          <Group $h={81} $mt={13}>
            <Legend $mt={-15}><Label>{" "}动画{" "}</Label></Legend>
            <Row $h={26} $mt={1} $pl={6}><Label $w={74}><Song>循环选项:</Song></Label><Drop value="一次" w={282} /></Row>
            <Playback>
              <FrameCount><Song>1/1</Song></FrameCount>
              {keys.map((d) => (
                <PlayKey key={d}><svg width="15" height="12" fill="#9a989a"><path d={d} /></svg></PlayKey>
              ))}
            </Playback>
          </Group>
        </Settings>
      </ExportBody>
    </ExportWindow>
  );
}

const LinkWrap = styled.span`
  flex: none;
  width: 29px;
  height: 32px;
  margin-top: -26px;
`;
function LinkMark() {
  return (
    <LinkWrap>
      <svg width="29" height="32" fill="none" stroke="#959395" strokeWidth="2">
        <path d="M0 1h6v30H0" />
        <path d="M16 13v-3a4 4 0 0 1 8 0v3M16 19v3a4 4 0 0 0 8 0v-3M20 11v10" strokeWidth="1.800" />
      </svg>
    </LinkWrap>
  );
}

/* place icons */
const StarPlace = () => (
  <svg width="40" height="38" viewBox="0 0 40 38">
    <path d="M22 4l4 10h11l-9 7 3 13-9-6-10 6 3-13-9-7h11z" fill="#279df0" stroke="#1580d4" />
    <path d="M9 5h11M7 10h11M2 16h8M2 24h9M0 30h8" stroke="#7cc0f2" strokeWidth="1.500" />
  </svg>
);
const DesktopPlace = () => (
  <svg width="36" height="38" viewBox="0 0 36 38"><path d="M0 6h36v26H0z" fill="#0a94f8" stroke="#0878c8" /><path d="M36 6L14 32h22z" fill="#1c9dfd" /><path d="M28 30h7" stroke="#fff" strokeDasharray="1.500 1.500" /></svg>
);
const LibraryPlace = () => (
  <svg width="36" height="38" viewBox="0 0 36 38"><path d="M0 3h16v3h20v26H0z" fill="#ffd978" /><path d="M0 3h16v4H0z" fill="#f4bd38" /><path d="M2 4h4v2H2z" fill="#19a7ee" /><path d="M6 19h24v14h-7v-7H13v7H6z" fill="#15a8f0" /></svg>
);
const Monitor = ({ x, y }) => (
  <g transform={`translate(${x} ${y})`}>
    <path d="M0 0l26 7v19L0 17z" fill="#2c9ff5" stroke="#54677a" />
    <path d="M8 21l8 3-2 4-8 1z" fill="#b8bec6" />
  </g>
);
const PcPlace = () => (
  <svg width="40" height="38" viewBox="0 0 40 38"><Monitor x={13} y={1} /><path d="M0 28l8-4 24 6-7 6z" fill="#d4d8dc" stroke="#969ba3" strokeDasharray="2 1" /></svg>
);
const NetPlace = () => (
  <svg width="36" height="38" viewBox="0 0 36 38"><circle cx="22" cy="14" r="13.500" fill="#4596c0" /><path d="M13 4c5-5 11-4 14-2l-4 6-6 1zM30 8l5 5-2 8-4-5z" fill="#c3e2ef" /><g transform="translate(0 11) scale(.92)"><Monitor x={1} y={0} /></g></svg>
);

function Thumbnail() {
  const rows = [
    [22, ["#398e32", "#9272bf", "#2b66af", "#278c8e", "#349b7c"]],
    [32, ["#398e32", "#9272bf", "#2b66af", "#278c8e", "#349b7c"]],
    [48, ["#6258b8", "#43304f", "#4a2520", "#6e5d4c", "#1269ae"]],
    [64, ["#f49b18", "#4a2520", "#54416d", "#2671b5", "#5f5a55"]],
    [76, ["#46335e", "#2273bd", "#656060", "#428fc9", "#4a2520"]],
    [88, ["#258bd7", "#6e5d4c", "#146bb4", "#4a2520", "#503564"]],
  ];
  return (
    <svg width="72" height="118" viewBox="0 0 72 118">
      <path d="M4 4h67v113H4z" fill="#bbb" opacity=".6" />
      <path d="M3 3h66v112H3z" fill="#f5f6fa" />
      <path d="M3 3h66v3H3zM3 100h66v15H3z" fill="#fff" />
      <path d="M3 5h66v15H3z" fill="#1b0870" />
      <circle cx="35" cy="12" r="7" fill="#248fe5" /><circle cx="27" cy="8.500" r="3" fill="#8fc640" /><circle cx="25" cy="14.500" r="3.500" fill="#24a9f0" /><circle cx="45" cy="8.500" r="3.500" fill="#f0592d" /><circle cx="35" cy="13" r="3" fill="#f4438a" /><circle cx="42" cy="16.500" r="3" fill="#21aef1" />
      <path d="M49 7h7v10h-7z" fill="#e9edfb" />
      {rows.map(([y, cs]) => cs.map((c, i) => (
        <rect key={y + c + i} x={15 + i * 8.4} y={i === 0 && (y === 48 || y === 64) ? y - 3 : y + 2} width={7.8} height={i === 0 && (y === 48 || y === 64) ? 13 : 6} fill={c} />
      )))}
      <path d="M16 103h14" stroke="#9bd0f2" strokeWidth="2" strokeDasharray="5 1" /><path d="M38 103h2M46 103h2M53 103h2" stroke="#999" />
    </svg>
  );
}

function SaveDialog() {
  return (
    <Dialog>
      <DialogTitle>
        将优化结果存储为
        <svg width="14" height="14" stroke="#222" strokeWidth="1.500"><path d="M1 1l12 12M13 1L1 13" /></svg>
      </DialogTitle>
      <DialogBody>
        <PlaceColumn>
          <LookInLabel><Song>保存在(I):</Song></LookInLabel>
          <Places>
            <Place><StarPlace />快速访问</Place>
            <Place><DesktopPlace />桌面</Place>
            <Place><LibraryPlace />库</Place>
            <Place><PcPlace />此电脑</Place>
            <Place><NetPlace />网络</Place>
          </Places>
        </PlaceColumn>
        <FileColumn>
          <PathRow>
            <WinSelect $w={330} $h={28} $open>
              <Gap $w={5} />
              <svg width="17" height="21"><path d="M0 1h15v19H0z" fill="#ffd977" stroke="#eebd50" /><path d="M13 12h3v8h-3z" fill="#f6c453" /></svg>
              <Label $ml={5}>素材</Label>
              <Chevron color="#555" w={12} />
            </WinSelect>
            <Gap $w={11} />
            <svg width="20" height="20"><circle cx="10" cy="10" r="9.500" fill="#2680b8" stroke="#5a7c98" /><path d="M2 8a8 8 0 0 1 16 0z" fill="#8caac0" /><path d="M16 10H6M10 5l-5 5 5 5" fill="none" stroke="#fff" strokeWidth="2.500" /></svg>
            <Gap $w={1} />
            <svg width="20" height="22"><path d="M1 7h6l2-2h9l-3 13-14 3z" fill="#f2d272" stroke="#cfa23a" /><path d="M9 17c5-1 5-5 4-9h4l-5-7-6 7h3c1 4 1 6 0 9z" fill="#2f9e38" stroke="#1d7426" strokeWidth=".7" /></svg>
            <Gap $w={1} />
            <svg width="22" height="20"><path d="M1 4h6l2 2h7v10L2 18z" fill="#f3cd6c" stroke="#dba93e" /><path d="M4 8h15l-4 8-13 2z" fill="#ffe397" /><circle cx="17" cy="4.500" r="3" fill="#ffd23c" stroke="#f26722" strokeWidth="2" /></svg>
            <svg width="20" height="18"><path d="M1 1h18v16H1z" fill="#fff" stroke="#116fd4" strokeWidth="2" /><path d="M1 1h18v4H1z" fill="#116fd4" /><path d="M4 7.500h3M4 12.500h3" stroke="#e8762b" strokeWidth="3" /><path d="M9 7.500h3M9 12.500h3" stroke="#245bc4" strokeWidth="3" /><path d="M14 7.500h3" stroke="#258a33" strokeWidth="3" /><path d="M14 12.500h3" stroke="#c99b20" strokeWidth="3" /></svg>
            <svg width="9" height="5"><path d="M0 0h9L4.500 5z" fill="#222" /></svg>
          </PathRow>
          <FileList>
            <FileItem><Thumbnail />学成网首页.jpg</FileItem>
          </FileList>
          <FormArea>
            <FormRows>
              <FormRow $mb={9}><span><Song>文件名(N):</Song></span><WinSelect $open><span><Song>logo.jpg</Song></span><Chevron color="#555" w={11} /></WinSelect></FormRow>
              <FormRow $mb={33}><span><Song>格式:</Song></span><WinSelect><span>仅限图像</span><Chevron color="#555" w={11} /></WinSelect></FormRow>
              <FormRow $mb={6}><span>设置:</span><WinSelect><span>默认设置</span><Chevron color="#555" w={11} /></WinSelect></FormRow>
              <FormRow $mb={0}><span>切片:</span><WinSelect $hot><span>选中的切片</span><Chevron color="#555" w={11} /></WinSelect></FormRow>
            </FormRows>
            <ButtonStack>
              <WinButton $primary><Song>保存(S)</Song></WinButton>
              <WinButton>取消</WinButton>
            </ButtonStack>
          </FormArea>
        </FileColumn>
      </DialogBody>
      <ResizeGrip />
    </Dialog>
  );
}

function InputBars() {
  return (
    <>
      <ImeBar>
        <ImeCell $w={36}>
          <svg width="30" height="30" fill="none" stroke="#4a4a4e"><circle cx="13" cy="15" r="11.500" strokeWidth="2" /><path d="M8 7a9.500 9.500 0 0 1 13 13" strokeWidth="4" strokeDasharray="1.500 1.500" /><path d="M8 21l4-7v-4M12 15l4 5" strokeWidth="1.300" /><path d="M26 26h4" /></svg>
        </ImeCell>
        <ImeCell $w={63}>
          <svg width="26" height="24" fill="none" stroke="#4c4c50" strokeWidth="3.500"><path d="M2 6h22v10H2zM13 0v24" /></svg>
        </ImeCell>
        <ImeCell $w={8}><Moon color="#4c4c50" /></ImeCell>
        <ImeCell $w={67}><Comma color="#4c4c50" /></ImeCell>
        <ImeCell $w={24}><Keyboard color="#5b5b5f" /></ImeCell>
        <ImeCell $w={68}><Gear color="#4c4c50" s={25} hole="#f4f4f6" r={5} /></ImeCell>
      </ImeBar>
      <MiniBar>
        <QBadge>Q</QBadge>
        <MiniCell>A</MiniCell>
        <Gap $w={1} />
        <MiniCell><Moon color="#4d79ac" s={13} /></MiniCell>
        <MiniCell><Comma color="#4d79ac" w={10} /></MiniCell>
        <MiniCell><Keyboard color="#4d79ac" w={15} /></MiniCell>
        <MiniCell><svg width="12" height="14" fill="none" stroke="#4d79ac" strokeWidth="2"><path d="M1 6h10M8 2v9M4 0v12M1 8l4-4" /></svg></MiniCell>
        <MiniCell><FaWrench size={12} /></MiniCell>
      </MiniBar>
    </>
  );
}

function Bottom() {
  return (
    <>
      <Taskbar>
        <TaskSlot $w={51} $ml={93}>
          <svg width="22" height="26" viewBox="0 0 22 26" fill="#e5e5e5"><path d="M0 8l9-1.500V14H0zM10 6l12-2v10H10zM0 15h9v7.500L0 21zM10 15h12v10l-12-2z" /></svg>
        </TaskSlot>
        <TaskSlot $w={51} $ml={13} $open>
          <svg width="28" height="27"><path d="M0 3h12l2 2h14v20H0z" fill="#e7cc78" /><path d="M0 3h12v3H0z" fill="#edb83c" /><path d="M5 15h18v11h-5v-6h-8v6H5z" fill="#26a5dd" /></svg>
        </TaskSlot>
        <TaskSlot $w={51} $ml={11}>
          <svg width="30" height="30" viewBox="0 0 30 30"><circle cx="15" cy="15" r="14.500" fill="#e0b83a" /><path d="M15 15L2.500 7.500A14.500 14.500 0 0 1 28 8.500H15z" fill="#cc4b3d" /><path d="M2.500 7.500A14.500 14.500 0 0 0 14 29.500l6-10.500-10-1z" fill="#3d9b50" /><circle cx="15" cy="15" r="7" fill="#eee" /><circle cx="15" cy="15" r="5.500" fill="#4377d4" /></svg>
        </TaskSlot>
        <TaskSlot $w={51} $ml={11} $open>
          <svg width="29" height="28"><path d="M1 1h27v26H1z" fill="#f0d3c4" stroke="#d9683c" strokeWidth="2" /><path d="M9 20V5h5c7 0 7 8 0 8h-4" fill="none" stroke="#dc5a28" strokeWidth="4" /><path d="M3 20l22 6V16z" fill="#fff" /><circle cx="21" cy="18" r="4.500" fill="#e5582a" stroke="#fff" /><path d="M21 18v-5h5z" fill="#fff" /></svg>
        </TaskSlot>
        <TaskSlot $w={51} $ml={11} $open>
          <svg width="31" height="30" viewBox="0 0 31 30"><path d="M1 9l3-2 20 15v7L1 11zM1 20l3 2L24 8V0L1 18z" fill="#1477bd" /><path d="M22 0l8 3v23l-8 4z" fill="#2492dc" /></svg>
        </TaskSlot>
        <TaskSlot $w={61} $ml={6} $open $active><PsTile>Ps</PsTile></TaskSlot>
        <Tray>
          <Chevron flip w={15} color="#ddd" />
          <Gap $w={12} />
          <svg width="21" height="18" fill="none" stroke="#ddd" strokeWidth="1.500"><path d="M1 6h3l5-5v16l-5-5H1zM12 6c2 2 2 4 0 6M14.500 4c4 3 4 7 0 10M17 2c5 4 5 10 0 14" /></svg>
          <Label $ml={11} $size={16}>中</Label>
          <SogouTile>S</SogouTile>
          <TrayEdge />
        </Tray>
      </Taskbar>
      <Player>
        <Progress />
        <PlayerControls>
          <svg width="14" height="15" fill="#fff"><path d="M0 0h4.500v15H0zM9 0h4.500v15H9z" /></svg>
          <Elapsed>02:48</Elapsed><Duration>/ 07:22</Duration>
          <svg width="21" height="20" fill="#eee"><path d="M0 6h4l8-6v20l-8-6H0zM13.500 6h2v8h-2zM18 1h2.500v18H18z" /></svg>
          <Gap $w={11} />
          <Gear color="#eee" s={23} hole="#141517" r={4.5} />
          <Gap $w={20} />
          <svg width="18" height="18" fill="none" stroke="#eee" strokeWidth="2.500"><path d="M1 6V1h5M12 1h5v5M17 12v5h-5M6 17H1v-5" /></svg>
        </PlayerControls>
      </Player>
    </>
  );
}

export default function App() {
  return (
    <Stage>
      <Global />
      <PsMain />
      <WindowShade />
      <Export />
      <SaveDialog />
      <Pointer>
        <svg width="30" height="36">
          <circle cx="19" cy="11" r="7" fill="#dcecfb" stroke="#1686ee" strokeWidth="4.500" />
          <path d="M2 11v20l5-4 3.500 8 4-2-3.500-7h6z" fill="#fff" stroke="#333" />
        </svg>
      </Pointer>
      <InputBars />
      <Bottom />
    </Stage>
  );
}
